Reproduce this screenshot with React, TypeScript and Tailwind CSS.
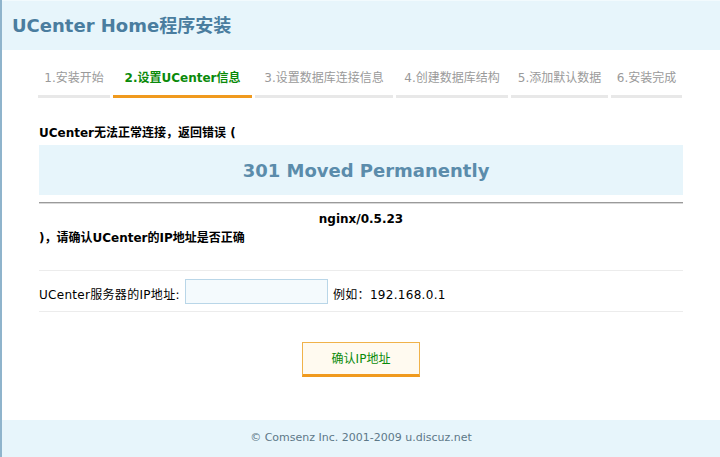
import React from "react";

const steps = [
  { label: "1.安装开始", w: "w-[72px]", active: false },
  { label: "2.设置UCenter信息", w: "w-[139px]", active: true },
  { label: "3.设置数据库连接信息", w: "w-[138px]", active: false },
  { label: "4.创建数据库结构", w: "w-[112px]", active: false },
  { label: "5.添加默认数据", w: "w-[97px]", active: false },
  { label: "6.安装完成", w: "w-[71px]", active: false },
];

export default function App() {
  return (
    <div
      className="w-[720px] h-[457px] flex flex-col border-l-2 border-[#8fb4cc] bg-white text-[12px] text-black overflow-hidden"
      style={{ fontFamily: '"DejaVu Sans", Verdana, "Noto Sans CJK SC", sans-serif' }}
    >
      <header className="h-[50px] shrink-0 bg-[#e7f5fb] border-t border-[#f2fafd] flex items-center pl-[10px]">
        <h1 className="text-[18px] font-bold text-[#4a7d9f] leading-none tracking-[0px]">
          UCenter Home程序安装
        </h1>
      </header>

      <main className="flex-1 px-[37px] pt-[20px]">
        <div className="flex gap-[3px] -ml-[1px]">
          {steps.map((s) => (
            <div
              key={s.label}
              className={`${s.w} text-center leading-[16px] pb-[9px] border-b-[3px] whitespace-nowrap ${
                s.active
                  ? "border-[#f09a1e] text-[#0a8a0a] font-bold"
                  : "border-[#e8e8e8] text-[#9a9a9a]"
              }`}
            >
              {s.label}
            </div>
          ))}
        </div>

        <p className="mt-[27px] font-bold leading-[16px]">UCenter无法正常连接，返回错误 (</p>
        <div className="mt-[4px] h-[50px] bg-[#e7f5fb] flex items-center justify-center">
          <span className="text-[18px] font-bold text-[#5b8cab] pl-[10px]">301 Moved Permanently</span>
        </div>
        <div className="mt-[7px] h-[2px] bg-[#9a9a9a] border-b border-[#d8d8d8]" />
        <p className="mt-[6px] font-bold leading-[19px] text-center">nginx/0.5.23</p>
        <p className="font-bold leading-[19px]">)，请确认UCenter的IP地址是否正确</p>

        <div className="mt-[22px] h-[42px] border-t border-b border-[#ececec] flex items-center">
          <span className="w-[146px] leading-[16px] pt-[8px] tracking-[0.3px] whitespace-nowrap">UCenter服务器的IP地址:</span>
          <input
            className="w-[143px] h-[25px] border border-[#b9d6e8] bg-[#f4fafd] outline-none"
            type="text"
          />
          <span className="leading-[16px] pt-[8px] pl-[5px] tracking-[0.3px]">例如：192.168.0.1</span>
        </div>

        <div className="mt-[30px] flex justify-center">
          <button className="w-[118px] h-[35px] border border-[#f0b24a] border-b-[3px] border-b-[#f09a1e] bg-[#fffaf0] text-[#0a8a0a] text-[12px] leading-none">
            确认IP地址
          </button>
        </div>
      </main>

      <footer className="h-[37px] shrink-0 bg-[#e7f5fb] flex items-center justify-center text-[11px] text-[#5d7888]">
        © Comsenz Inc. 2001-2009 u.discuz.net
      </footer>
    </div>
  );
}
